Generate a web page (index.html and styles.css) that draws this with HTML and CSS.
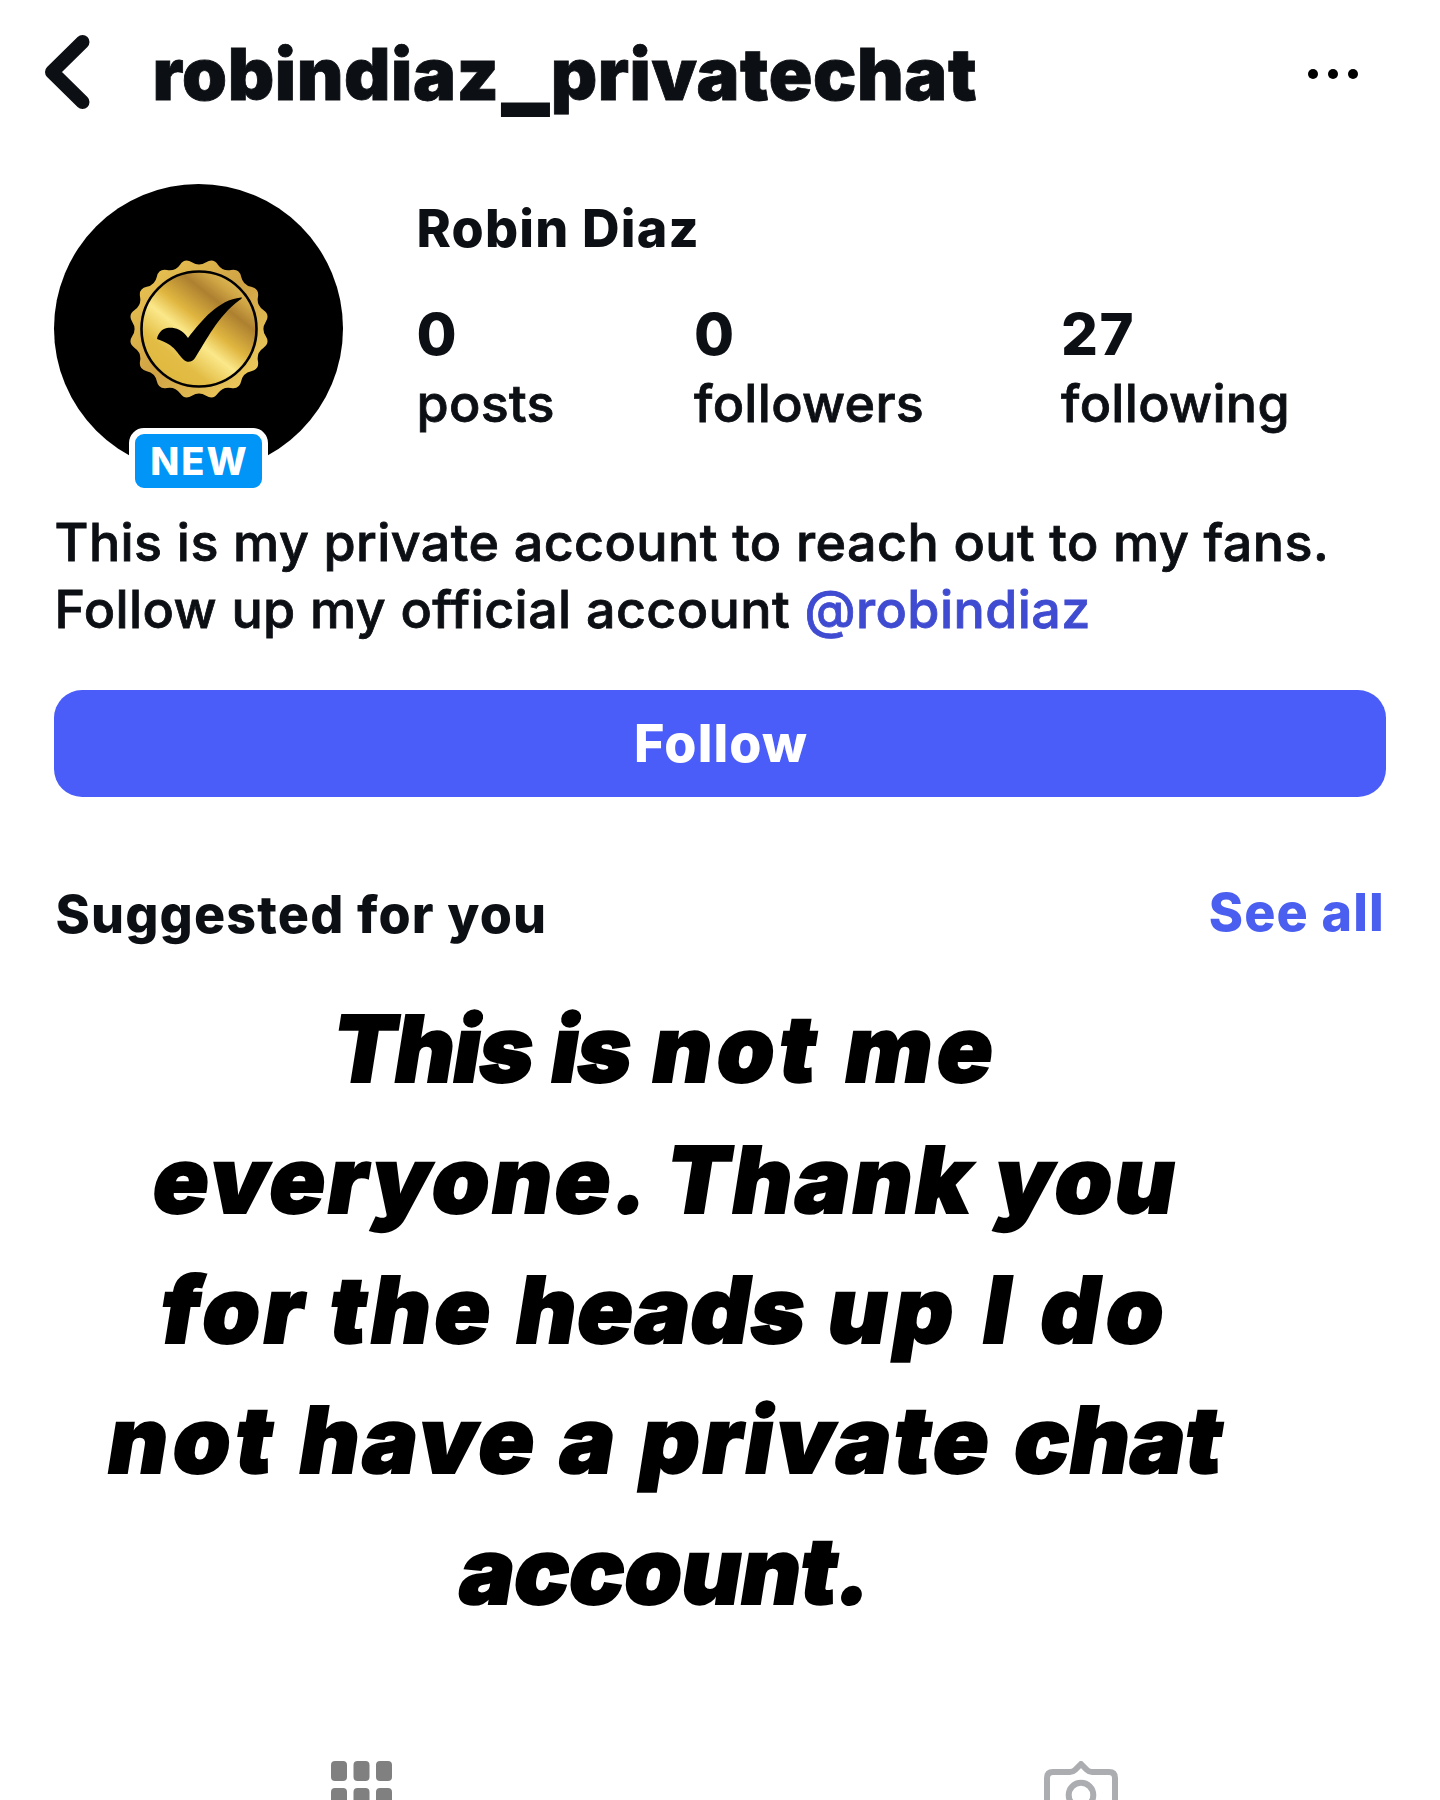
FILE: index.html
```html
<!DOCTYPE html>
<html lang="en">
<head>
<meta charset="utf-8">
<title>robindiaz_privatechat</title>
<link rel="stylesheet" href="styles.css">
</head>
<body>
<div class="page">
  <header class="topbar">
    <svg class="back" width="47" height="76" viewBox="0 0 47 76"><path d="M38.500 8 8 38 38.500 68"/></svg>
    <h1 class="title">robindiaz<span class="bar">_</span>privatechat</h1>
    <svg class="more" width="52" height="12" viewBox="0 0 52 12"><circle cx="6" cy="6" r="5"/><circle cx="26" cy="6" r="5"/><circle cx="46" cy="6" r="5"/></svg>
  </header>

  <section class="profile">
    <div class="avatar">
      <svg class="seal" width="144" height="144" viewBox="-72 -72 144 144">
        <defs>
          <linearGradient id="gold" gradientUnits="userSpaceOnUse" x1="-40" y1="52" x2="40" y2="-50">
            <stop offset="0" stop-color="#e0b840"/>
            <stop offset=".22" stop-color="#e2bc44"/>
            <stop offset=".42" stop-color="#fbe88a"/>
            <stop offset=".56" stop-color="#e0b640"/>
            <stop offset=".76" stop-color="#ad8030"/>
            <stop offset=".88" stop-color="#d0a645"/>
            <stop offset="1" stop-color="#e3bf5c"/>
          </linearGradient>
          <linearGradient id="edge" gradientUnits="userSpaceOnUse" x1="-50" y1="-50" x2="50" y2="50">
            <stop offset="0" stop-color="#e6bf50"/>
            <stop offset=".5" stop-color="#cfa244"/>
            <stop offset="1" stop-color="#ecc95c"/>
          </linearGradient>
        </defs>
        <path fill="url(#edge)" d="M7-66.050Q14-70.600 18.750-63.700Q23.500-56.800 31.750-58.350Q40-59.900 41.750-51.700Q43.500-43.500 51.700-41.750Q59.900-40 58.350-31.750Q56.800-23.500 63.700-18.750Q70.600-14 66.050-7Q61.500 0 66.050 7Q70.600 14 63.700 18.750Q56.800 23.500 58.350 31.750Q59.900 40 51.700 41.750Q43.500 43.500 41.750 51.700Q40 59.900 31.750 58.350Q23.500 56.800 18.750 63.700Q14 70.600 7 66.050Q0 61.500-7 66.050Q-14 70.600-18.750 63.700Q-23.500 56.800-31.750 58.350Q-40 59.900-41.750 51.700Q-43.500 43.500-51.700 41.750Q-59.900 40-58.350 31.750Q-56.800 23.500-63.700 18.750Q-70.600 14-66.050 7Q-61.500 0-66.050-7Q-70.600-14-63.700-18.750Q-56.800-23.500-58.350-31.750Q-59.900-40-51.700-41.750Q-43.500-43.500-41.750-51.700Q-40-59.900-31.750-58.350Q-23.500-56.800-18.750-63.700Q-14-70.600-7-66.050Q0-61.500 7-66.050Z" transform="scale(1.010)"/>
        <circle r="57.500" fill="url(#gold)" stroke="#000" stroke-width="2.600"/>
        <path d="M-42 10C-41 4-37 0-32-1C-25-1.500-18-1-11 9C3-9 19-29 42-31.500C44-31.700 42.500-30 40-28.500C19-13 7 12-4 29C-6 33-12 34-15 31C-22 25-23 16-42 10Z"/>
      </svg>
      <span class="badge">NEW</span>
    </div>
    <div class="info">
      <div class="name">Robin Diaz</div>
      <div class="stats">
        <div class="stat posts"><b>0</b><span>posts</span></div>
        <div class="stat followers"><b>0</b><span>followers</span></div>
        <div class="stat following"><b>27</b><span>following</span></div>
      </div>
    </div>
  </section>

  <p class="bio">This is my private account to reach out to my fans.<br>Follow up my official account <a class="mention">@robindiaz</a></p>

  <button class="follow">Follow</button>

  <div class="suggested">
    <h2>Suggested for you</h2>
    <a class="seeall">See all</a>
  </div>

  <div class="notice">
    <div class="l1"><span class="tight">This is</span> <span class="loose">not me</span></div>
    <div class="l2">everyone. Thank you</div>
    <div class="l3">for the <span class="snug">heads</span> <span class="loose">up I do</span></div>
    <div class="l4"><span class="loose">not</span> have a private <span class="snug">chat</span></div>
    <div class="l5">account.</div>
  </div>

  <nav class="tabs">
    <svg class="grid" width="62" height="40" viewBox="0 0 62 40"><path d="M4 0h8a4 4 0 0 1 4 4v12a4 4 0 0 1-4 4H4a4 4 0 0 1-4-4V4a4 4 0 0 1 4-4zM26.500 0h8a4 4 0 0 1 4 4v12a4 4 0 0 1-4 4h-8a4 4 0 0 1-4-4V4a4 4 0 0 1 4-4zM49 0h8a4 4 0 0 1 4 4v12a4 4 0 0 1-4 4h-8a4 4 0 0 1-4-4V4a4 4 0 0 1 4-4zM4 27h8a4 4 0 0 1 4 4v9H0v-9a4 4 0 0 1 4-4zM26.500 27h8a4 4 0 0 1 4 4v9h-16v-9a4 4 0 0 1 4-4zM49 27h8a4 4 0 0 1 4 4v9H45v-9a4 4 0 0 1 4-4z"/></svg>
    <svg class="tagged" width="74" height="40" viewBox="0 0 74 40"><path d="M3 44V17q0-6 6-6h17q3 0 5-2l6-6 6 6q2 2 5 2h17q6 0 6 6v27"/><circle cx="37" cy="34" r="12.300"/></svg>
  </nav>
</div>
</body>
</html>
```
FILE: styles.css
```css
body { margin: 0; background: #fff; color: #0c0f14; font-family: Inter, "Liberation Sans", sans-serif; }
.page { width: 1440px; height: 1800px; overflow: hidden; display: flex; flex-direction: column; }
.page > * { flex: none; }

.topbar { display: flex; align-items: flex-start; height: 184px; padding: 38px 81px 0 44px; box-sizing: border-box; }
.back { margin-top: -4px; fill: none; stroke: #0c0f14; stroke-width: 14; stroke-linecap: round; stroke-linejoin: round; }
.title { margin: 0 auto 0 61.5px; font-size: 72px; line-height: 72px; font-weight: 900; letter-spacing: .6px; -webkit-text-stroke: .8px; }
.bar { display: inline-block; width: 51px; text-align: center; letter-spacing: 0; transform: translateY(5.5px) scale(1.35, 1.35); transform-origin: 50% 68px; }
.more { margin-top: 29.5px; }

.profile { display: flex; height: 326px; }
.avatar { position: relative; width: 289px; height: 289px; margin-left: 54px; border-radius: 50%; background: #000; display: grid; place-items: center; }
.badge { position: absolute; left: 75px; top: 244px; width: 127px; height: 54px; border: 6px solid #fff; border-radius: 15px; background: #0095f6; color: #fff; font: 800 38px/55px Inter, sans-serif; letter-spacing: 2px; text-indent: 2px; text-align: center; }
.info { margin: 15px 0 0 73.5px; }
.name { font-size: 52px; line-height: 60px; font-weight: 800; letter-spacing: 1.2px; }
.stats { display: flex; margin-top: 40px; }
.stat { display: flex; flex-direction: column; gap: 5px; font-size: 52px; line-height: 60px; font-weight: 500; letter-spacing: .3px; -webkit-text-stroke: .8px; }
.stat b { font-size: 58px; line-height: 70px; font-weight: 800; letter-spacing: 1.5px; -webkit-text-stroke: 0; }
.posts { width: 277.5px; }
.followers { width: 367px; }

.bio { margin: 0 0 0 54.5px; font-size: 52px; line-height: 66.7px; font-weight: 500; letter-spacing: .43px; white-space: nowrap; -webkit-text-stroke: .8px; }
.mention { color: #3f4bd0; }
.follow { margin: 46.6px 54px 0; height: 107px; border: 0; border-radius: 28px; background: #4a5df9; color: #fff; font: 800 52px/108px Inter, sans-serif; letter-spacing: 1.1px; padding: 0 0 0 2px; }

.suggested { display: flex; justify-content: space-between; margin: 86.4px 55px 0 55.5px; font-size: 52px; line-height: 60px; font-weight: 800; letter-spacing: 1.15px; }
.suggested h2 { margin: 0; padding-top: 2px; font: inherit; }
.seeall { color: #4a5ff0; }

.notice { margin: 39px 0 0; width: 1333px; text-align: center; font-size: 92px; font-weight: 900; line-height: 130.3px; color: #000; -webkit-text-stroke: 2px #000; }
.notice div { transform: skewX(-9deg); }
.l1 { letter-spacing: 1.7px; word-spacing: 2px; }
.l2 { letter-spacing: 2.8px; }
.l3 { letter-spacing: 3.9px; }
.l4 { letter-spacing: 3.1px; word-spacing: 1px; }
.l5 { letter-spacing: -.3px; }
.l1 .tight { letter-spacing: -1.2px; }
.l1 .loose { letter-spacing: 4.7px; }
.l3 .snug { letter-spacing: .9px; }
.l3 .loose { letter-spacing: 6px; }
.l4 .snug { letter-spacing: .3px; }
.l4 .loose { letter-spacing: 5px; }

.tabs { display: flex; margin: 125px 0 0 331px; }
.grid { fill: #808080; }
.tagged { margin-left: 651px; fill: none; stroke: #acadb1; stroke-width: 6; stroke-linejoin: round; }
```
